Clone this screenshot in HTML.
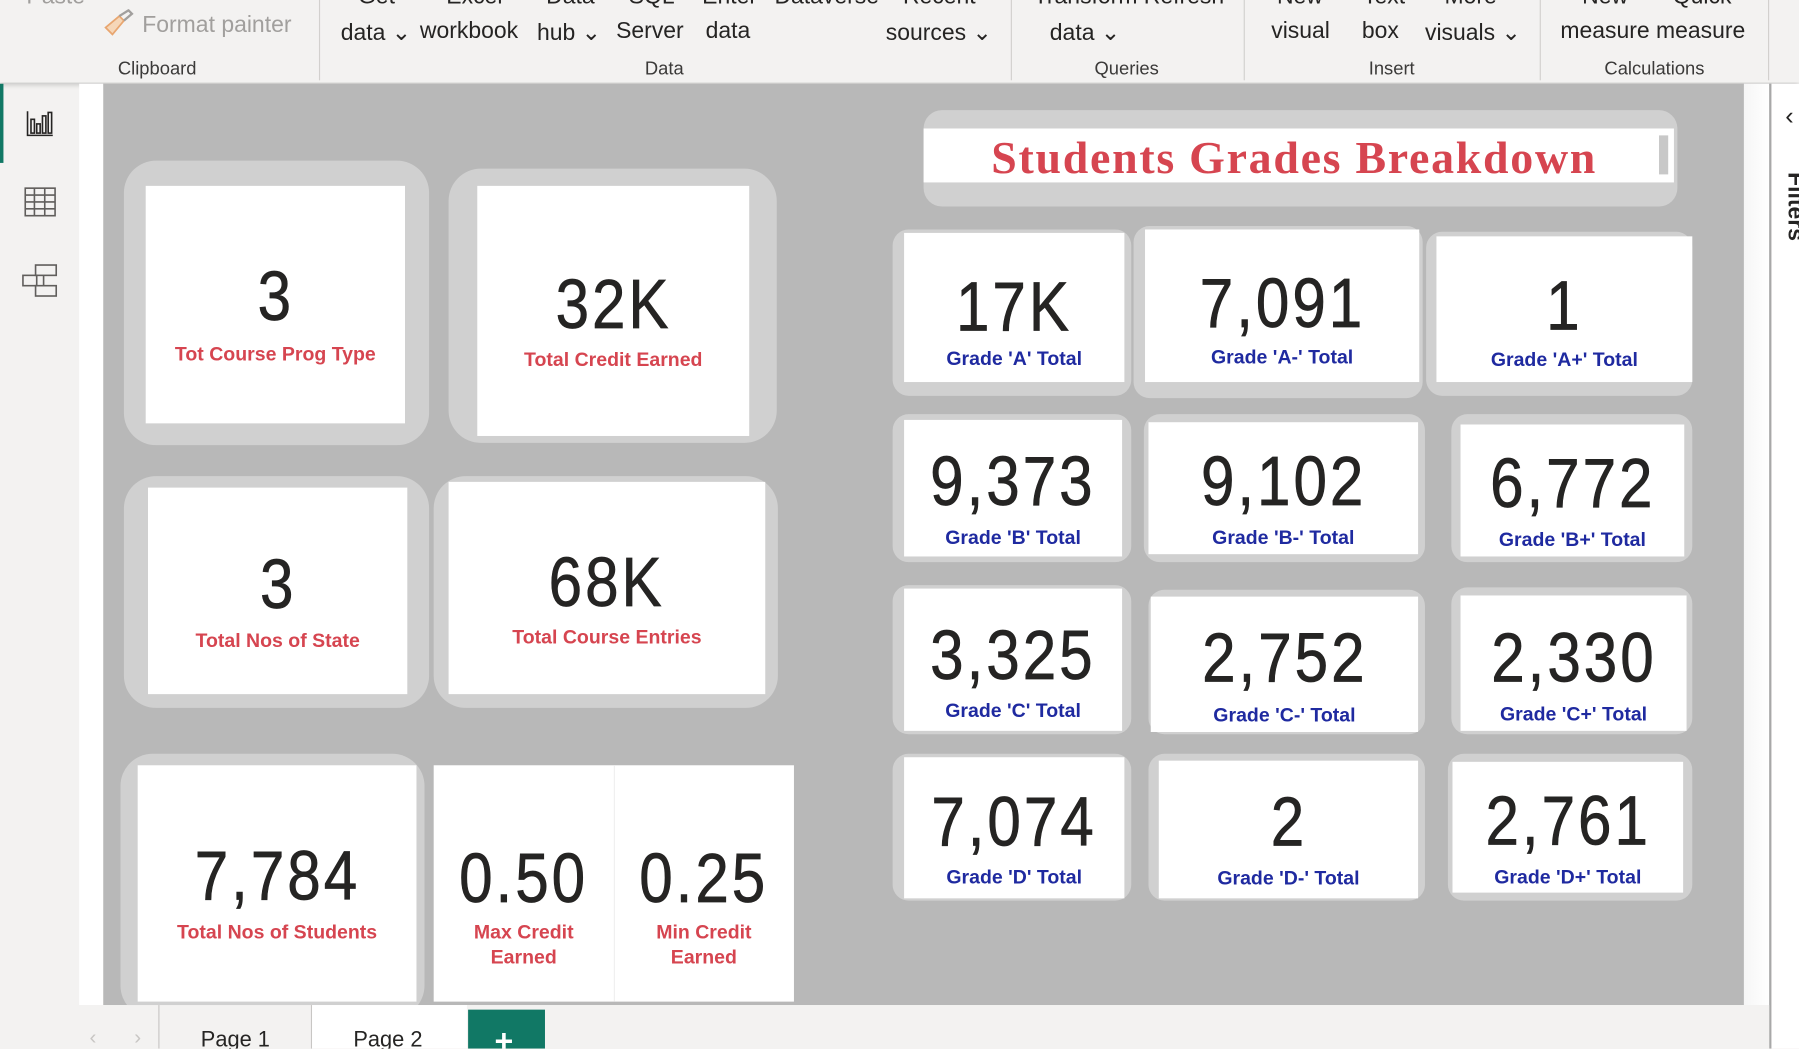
<!DOCTYPE html>
<html><head><meta charset="utf-8"><style>
*{margin:0;padding:0;box-sizing:border-box}
html,body{width:1799px;height:1049px;overflow:hidden;background:#f3f2f1;font-family:"Liberation Sans",sans-serif}
#w{position:absolute;left:0;top:0;width:1568px;height:914px;transform:scale(1.14732);transform-origin:0 0;overflow:hidden;background:#f3f2f1}
.a{position:absolute}
.rt{position:absolute;font-size:20px;color:#252423;white-space:nowrap}
.gl{position:absolute;top:52px;font-size:16px;color:#3b3a39;transform:translateX(-50%);white-space:nowrap}
.sep{position:absolute;top:0;width:1px;height:70px;background:#d2d0ce}
.o{position:absolute;background:#d0d0d0;border-radius:28px}
.o2{position:absolute;background:#d0d0d0;border-radius:14px}
.i{position:absolute;background:#fff}
.v{position:absolute;left:0;right:0;text-align:center;font-size:61px;color:#252423;line-height:1;margin-top:-4px;-webkit-text-stroke:0.6px #252423}
.v span{display:inline-block;transform:scaleX(.86);letter-spacing:3px}
.l{position:absolute;left:0;right:0;text-align:center;font-size:17px;font-weight:bold;color:#d64550;line-height:22px}
.b{color:#1f2aa0}
</style></head><body><div id="w">
<div class="a" style="left:0;top:0;width:1568px;height:72px;background:#f3f2f1;box-shadow:0 2px 4px rgba(0,0,0,.18)"></div>
<div class="rt" style="left:23px;top:-14px;color:#a19f9d">Paste</div>
<svg class="a" style="left:88px;top:8px" width="30" height="28" viewBox="0 0 30 28"><path d="M4 16 L16 6 L20 10 L10 22 Z" fill="#f6d7b8" stroke="#e8a670" stroke-width="1.5"/><path d="M16 6 L24 1 L27 4 L20 10" fill="none" stroke="#a19f9d" stroke-width="2"/></svg>
<div class="rt" style="left:124px;top:11px;color:#a19f9d">Format painter</div>
<div class="rt" style="left:312px;top:-14px">Get</div><div class="rt" style="left:297px;top:16px">data ⌄</div>
<div class="rt" style="left:389px;top:-14px">Excel</div><div class="rt" style="left:366px;top:16px">workbook</div>
<div class="rt" style="left:476px;top:-14px">Data</div><div class="rt" style="left:468px;top:16px">hub ⌄</div>
<div class="rt" style="left:548px;top:-14px">SQL</div><div class="rt" style="left:537px;top:16px">Server</div>
<div class="rt" style="left:612px;top:-14px">Enter</div><div class="rt" style="left:615px;top:16px">data</div>
<div class="rt" style="left:675px;top:-14px">Dataverse</div>
<div class="rt" style="left:787px;top:-14px">Recent</div><div class="rt" style="left:772px;top:16px">sources ⌄</div>
<div class="rt" style="left:901px;top:-14px">Transform Refresh</div><div class="rt" style="left:915px;top:16px">data ⌄</div>
<div class="rt" style="left:1113px;top:-14px">New</div><div class="rt" style="left:1108px;top:16px">visual</div>
<div class="rt" style="left:1188px;top:-14px">Text</div><div class="rt" style="left:1187px;top:16px">box</div>
<div class="rt" style="left:1259px;top:-14px">More</div><div class="rt" style="left:1242px;top:16px">visuals ⌄</div>
<div class="rt" style="left:1379px;top:-14px">New</div><div class="rt" style="left:1458px;top:-14px">Quick</div>
<div class="rt" style="left:1360px;top:16px">measure measure</div>
<div class="gl" style="left:137px">Clipboard</div><div class="gl" style="left:579px">Data</div><div class="gl" style="left:982px">Queries</div><div class="gl" style="left:1213px">Insert</div><div class="gl" style="left:1442px">Calculations</div>
<div class="sep" style="left:278px"></div><div class="sep" style="left:881px"></div><div class="sep" style="left:1084px"></div><div class="sep" style="left:1342px"></div><div class="sep" style="left:1541px"></div>
<div class="a" style="left:0;top:73px;width:3px;height:69px;background:#117865"></div>
<svg class="a" style="left:22px;top:95px" width="26" height="26" viewBox="0 0 26 26" fill="none" stroke="#252423" stroke-width="1.4"><path d="M2 2V23H24"/><rect x="5" y="9" width="3" height="12"/><rect x="10" y="13" width="3" height="8"/><rect x="15" y="6" width="3" height="15"/><rect x="20" y="3" width="3" height="18"/></svg>
<svg class="a" style="left:21px;top:163px" width="28" height="26" viewBox="0 0 28 26" fill="none" stroke="#605e5c" stroke-width="1.4"><rect x="1" y="1" width="26" height="24"/><path d="M1 7H27M1 13H27M1 19H27M9 1V25M18 1V25"/></svg>
<svg class="a" style="left:19px;top:230px" width="32" height="32" viewBox="0 0 32 32" fill="none" stroke="#605e5c" stroke-width="1.4"><rect x="12" y="1" width="18" height="9"/><rect x="1" y="10" width="12" height="9"/><rect x="12" y="19" width="18" height="9"/><path d="M19 10V19"/></svg>
<div class="a" style="left:69px;top:73px;width:21px;height:803px;background:#fff"></div>
<div class="a" style="left:90px;top:73px;width:1430px;height:803px;background:#b8b8b8"></div>
<div class="a" style="left:1520px;top:73px;width:22px;height:803px;background:linear-gradient(90deg,#f6f6f6,#fff)"></div>
<div class="a" style="left:1542px;top:73px;width:2px;height:841px;background:#a8a8a8"></div>
<div class="a" style="left:1544px;top:73px;width:24px;height:841px;background:#fff"></div>
<div class="a" style="left:1556px;top:88px;font-size:22px;color:#252423">‹</div>
<div class="a" style="left:1552px;top:150px;font-size:20px;font-weight:bold;color:#252423;transform-origin:0 0;transform:rotate(90deg) translate(0,-24px);white-space:nowrap">Filters</div>

<div class="o" style="left:108px;top:140px;width:266px;height:248px"></div>
<div class="i" style="left:127px;top:162px;width:226px;height:207px"><div class="v" style="top:70px"><span>3</span></div><div class="l" style="top:136px">Tot Course Prog Type</div></div>
<div class="o" style="left:391px;top:147px;width:286px;height:239px"></div>
<div class="i" style="left:416px;top:162px;width:237px;height:218px"><div class="v" style="top:77px"><span>32K</span></div><div class="l" style="top:141px">Total Credit Earned</div></div>
<div class="o" style="left:108px;top:415px;width:266px;height:202px"></div>
<div class="i" style="left:129px;top:425px;width:226px;height:180px"><div class="v" style="top:58px"><span>3</span></div><div class="l" style="top:123px">Total Nos of State</div></div>
<div class="o" style="left:378px;top:415px;width:300px;height:202px"></div>
<div class="i" style="left:391px;top:420px;width:276px;height:185px"><div class="v" style="top:61px"><span>68K</span></div><div class="l" style="top:125px">Total Course Entries</div></div>
<div class="o" style="left:105px;top:657px;width:265px;height:230px"></div>
<div class="i" style="left:120px;top:667px;width:243px;height:206px"><div class="v" style="top:70px"><span>7,784</span></div><div class="l" style="top:135px">Total Nos of Students</div></div>
<div class="i" style="left:378px;top:667px;width:314px;height:206px"></div>
<div class="a" style="left:535px;top:667px;width:1px;height:206px;background:#f0f0f0"></div>
<div class="i" style="left:378px;top:667px;width:157px;height:206px;background:transparent"><div class="v" style="top:72px"><span>0.50</span></div><div class="l" style="top:135px">Max Credit<br>Earned</div></div>
<div class="i" style="left:535px;top:667px;width:157px;height:206px;background:transparent"><div class="v" style="top:72px"><span>0.25</span></div><div class="l" style="top:135px">Min Credit<br>Earned</div></div>

<div class="o2" style="left:805px;top:96px;width:657px;height:84px;border-radius:16px"></div>
<div class="i" style="left:805px;top:112px;width:654px;height:47px"></div>
<div class="a" style="left:805px;top:115px;width:646px;text-align:center;font-family:'Liberation Serif',serif;font-weight:bold;font-size:40px;letter-spacing:1.5px;color:#d64550;line-height:46px">Students Grades Breakdown</div>
<div class="a" style="left:1446px;top:118px;width:8px;height:34px;background:#c8c8c8"></div>

<div class="o2" style="left:778px;top:200px;width:208px;height:145px"></div>
<div class="i" style="left:788px;top:203px;width:192px;height:130px"><div class="v" style="top:38px"><span>17K</span></div><div class="l b" style="top:99px">Grade 'A' Total</div></div>
<div class="o2" style="left:988px;top:197px;width:252px;height:150px"></div>
<div class="i" style="left:998px;top:200px;width:239px;height:133px"><div class="v" style="top:38px"><span>7,091</span></div><div class="l b" style="top:101px">Grade 'A-' Total</div></div>
<div class="o2" style="left:1243px;top:202px;width:232px;height:143px"></div>
<div class="i" style="left:1252px;top:206px;width:223px;height:127px"><div class="v" style="top:34px"><span>1</span></div><div class="l b" style="top:97px">Grade 'A+' Total</div></div>

<div class="o2" style="left:778px;top:361px;width:208px;height:129px"></div>
<div class="i" style="left:788px;top:366px;width:190px;height:119px"><div class="v" style="top:27px"><span>9,373</span></div><div class="l b" style="top:92px">Grade 'B' Total</div></div>
<div class="o2" style="left:997px;top:361px;width:245px;height:129px"></div>
<div class="i" style="left:1001px;top:368px;width:235px;height:115px"><div class="v" style="top:25px"><span>9,102</span></div><div class="l b" style="top:90px">Grade 'B-' Total</div></div>
<div class="o2" style="left:1265px;top:361px;width:210px;height:129px"></div>
<div class="i" style="left:1273px;top:370px;width:195px;height:115px"><div class="v" style="top:25px"><span>6,772</span></div><div class="l b" style="top:90px">Grade 'B+' Total</div></div>

<div class="o2" style="left:778px;top:510px;width:208px;height:130px"></div>
<div class="i" style="left:788px;top:513px;width:190px;height:124px"><div class="v" style="top:32px"><span>3,325</span></div><div class="l b" style="top:96px">Grade 'C' Total</div></div>
<div class="o2" style="left:1001px;top:514px;width:241px;height:126px"></div>
<div class="i" style="left:1003px;top:520px;width:233px;height:118px"><div class="v" style="top:27px"><span>2,752</span></div><div class="l b" style="top:93px">Grade 'C-' Total</div></div>
<div class="o2" style="left:1265px;top:512px;width:210px;height:128px"></div>
<div class="i" style="left:1273px;top:519px;width:197px;height:118px"><div class="v" style="top:28px"><span>2,330</span></div><div class="l b" style="top:93px">Grade 'C+' Total</div></div>

<div class="o2" style="left:778px;top:657px;width:208px;height:128px"></div>
<div class="i" style="left:788px;top:660px;width:192px;height:123px"><div class="v" style="top:30px"><span>7,074</span></div><div class="l b" style="top:94px">Grade 'D' Total</div></div>
<div class="o2" style="left:1001px;top:657px;width:241px;height:128px"></div>
<div class="i" style="left:1010px;top:663px;width:226px;height:120px"><div class="v" style="top:27px"><span>2</span></div><div class="l b" style="top:92px">Grade 'D-' Total</div></div>
<div class="o2" style="left:1262px;top:657px;width:213px;height:128px"></div>
<div class="i" style="left:1266px;top:664px;width:201px;height:114px"><div class="v" style="top:25px"><span>2,761</span></div><div class="l b" style="top:90px">Grade 'D+' Total</div></div>

<div class="a" style="left:69px;top:876px;width:1473px;height:38px;background:#f3f2f1"></div>
<div class="a" style="left:78px;top:894px;font-size:18px;color:#c8c6c4">‹</div>
<div class="a" style="left:117px;top:894px;font-size:18px;color:#c8c6c4">›</div>
<div class="a" style="left:138px;top:876px;width:1px;height:38px;background:#c8c6c4"></div>
<div class="a" style="left:271px;top:876px;width:1px;height:38px;background:#c8c6c4"></div>
<div class="a" style="left:175px;top:896px;font-size:19px;color:#252423">Page 1</div>
<div class="a" style="left:272px;top:876px;width:135px;height:38px;background:#fff"></div>
<div class="a" style="left:308px;top:896px;font-size:19px;color:#252423">Page 2</div>
<div class="a" style="left:408px;top:880px;width:67px;height:34px;background:#117865"></div>
<div class="a" style="left:431px;top:894px;font-size:28px;font-weight:bold;color:#fff;line-height:28px">+</div>
</div></body></html>
